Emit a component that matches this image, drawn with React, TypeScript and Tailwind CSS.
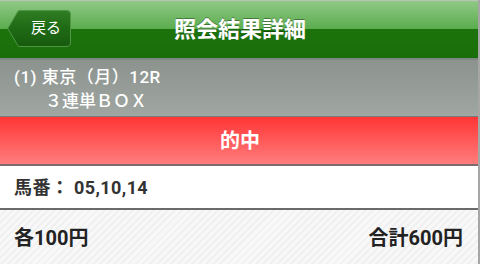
const font = "font-['Roboto','Noto_Sans_CJK_JP',sans-serif]";

function BackButton() {
  return (
    <div className="relative h-[37px] w-[64px]">
      <svg className="absolute inset-0" width="64" height="37" viewBox="0 0 64 37">
        <defs>
          <linearGradient id="bb" x1="0" y1="0" x2="0" y2="1">
            <stop offset="0" stopColor="#2f7d24" />
            <stop offset="0.5" stopColor="#1f6a15" />
            <stop offset="1" stopColor="#175a0e" />
          </linearGradient>
        </defs>
        <path
          d="M0.8 18.5 L11 1.2 Q11.6 0.5 13 0.5 L60 0.5 Q63.5 0.5 63.5 4 L63.5 33 Q63.5 36.5 60 36.5 L13 36.5 Q11.6 36.5 11 35.8 Z"
          fill="url(#bb)"
          stroke="#4f9745"
          strokeWidth="1"
        />
      </svg>
      <span className="relative flex h-full items-center pl-[24px] text-[15px] text-white">
        戻る
      </span>
    </div>
  );
}

export default function App() {
  return (
    <div className={`flex h-[264px] w-[480px] overflow-hidden bg-white ${font}`}>
      <div className="flex min-w-0 flex-1 flex-col">
        <div className="relative h-[58px] shrink-0 border-t border-[#b9c4b6] bg-[linear-gradient(to_bottom,#90c885_0%,#5aac4e_50%,#1c730c_50%,#1a6e0a_100%)]">
          <div className="absolute left-[7px] top-[9px]">
            <BackButton />
          </div>
          <div className="flex h-full items-center justify-center pl-[2px] text-[22px] font-bold text-white [text-shadow:0_-1px_0_rgba(0,0,0,0.35)]">
            照会結果詳細
          </div>
        </div>
        <div className="h-[59px] shrink-0 border-t-2 border-b border-t-[#7d8680] border-b-[#7a7a7a] bg-[linear-gradient(to_bottom,#8c938e,#a0a6a1)] px-[14px] pt-[5px] text-[17px] font-medium leading-[24px] text-white">
          <div className="tracking-[0.5px]">(1) 東京（月）12R</div>
          <div className="pl-[31px]">３連単ＢＯＸ</div>
        </div>
        <div className="flex h-[49px] shrink-0 items-center justify-center border-b-2 border-[#7b6d6d] bg-[linear-gradient(to_bottom,#ff3535,#ff7d7d)] pl-[2px] text-[20px] font-bold text-white">
          的中
        </div>
        <div className="flex h-[44px] shrink-0 items-center border-b-2 border-[#6a6a6a] bg-white px-[14px] text-[18px] font-bold tracking-[0.4px] text-[#333]">
          馬番： 05,10,14
        </div>
        <div className="flex flex-1 items-center justify-between bg-[repeating-linear-gradient(135deg,#f8f8f8_0px,#f8f8f8_3px,#f0f0f0_3px,#f0f0f0_5px)] pl-[14px] pr-[15px] pt-[2px] text-[20px] font-bold text-[#222]">
          <span>各100円</span>
          <span>合計600円</span>
        </div>
      </div>
      <div className="w-[2px] bg-[#a6a6a6]" />
    </div>
  );
}
